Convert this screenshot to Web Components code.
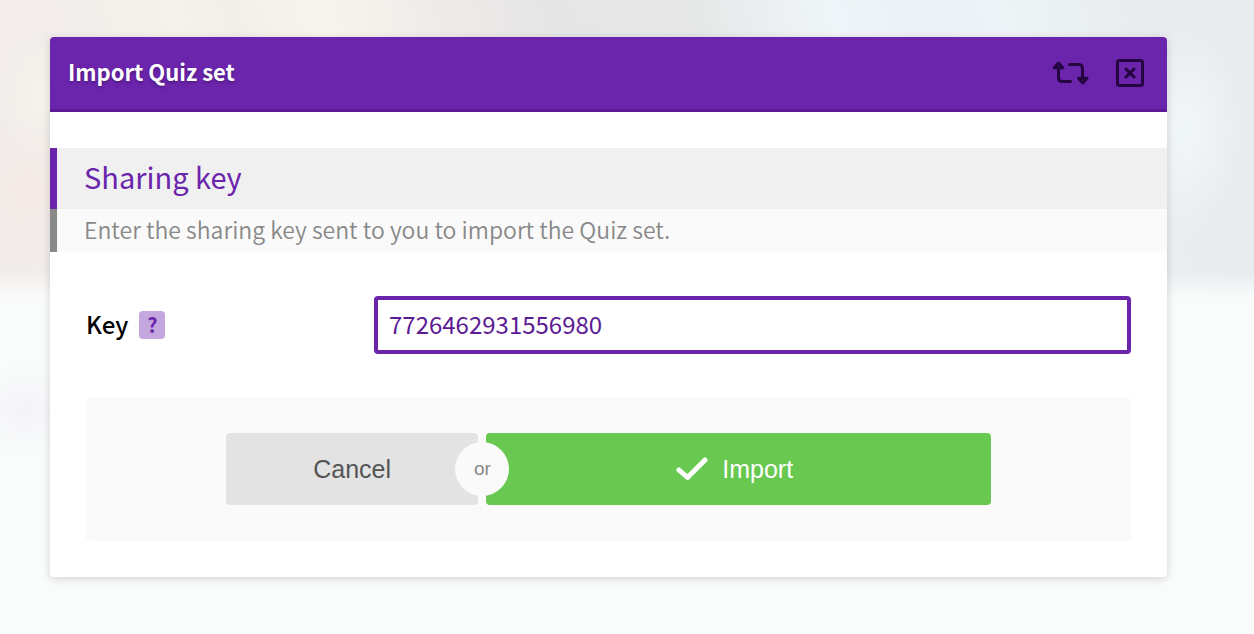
<!DOCTYPE html>
<html lang="en">
<head>
<meta charset="utf-8">
<title>Import Quiz set</title>
<style>
  html { min-height: 100%; background: #fafcfb; }
  body {
    margin: 0;
    min-height: 100vh;
    box-sizing: border-box;
    padding: 37px 87px 57px 50px;
    font-family: "Noto Sans CJK SC", "Open Sans", sans-serif;
    color: #000;
    background:
      radial-gradient(ellipse 60px 50px at 25px 410px, #f4f4f8 0%, transparent 100%),
      linear-gradient(to bottom, transparent 270px, #fafcfb 300px, #fafcfb 100%),
      radial-gradient(ellipse 60px 70px at 30px 190px, #f5eae8 0%, transparent 100%),
      radial-gradient(ellipse 50px 60px at 50px 95px, #f6f4ec 0%, transparent 100%),
      radial-gradient(ellipse 60px 110px at 1185px 130px, #f1f6f9 10%, transparent 100%),
      linear-gradient(75deg, #f1ece9 0%, #f2edea 16%, #f5f1eb 24%, #f3eeea 28%, #f8f5ed 34%, #f0ebe9 42%, #e6e6e6 50%, #e6e7e7 60%, #eff5f8 70%, #ebf1f4 76%, #edf3f6 82%, #e7ebee 93%, #e8ecef 100%);
  }
</style>
</head>
<body>
<quiz-dialog>
  <span slot="title">Import Quiz set</span>
  <icon-button slot="tools" label="Switch" icon="swap"></icon-button>
  <icon-button slot="tools" label="Close" icon="close"></icon-button>
  <section-heading>
    Sharing key
    <span slot="hint">Enter the sharing key sent to you to import the Quiz set.</span>
  </section-heading>
  <key-field label="Key" value="7726462931556980"></key-field>
  <action-bar></action-bar>
</quiz-dialog>

<script>
  function define(name, html, setup) {
    const template = document.createElement('template');
    template.innerHTML = html;
    customElements.define(name, class extends HTMLElement {
      constructor() {
        super();
        this.attachShadow({ mode: 'open' }).append(template.content.cloneNode(true));
      }
      connectedCallback() { if (setup) setup(this, this.shadowRoot); }
    });
  }

  define('quiz-dialog', `
    <style>
      :host { display: block; background: #fff; border-radius: 4px; box-shadow: 0 2px 8px rgba(0,0,0,.16); }
      header {
        display: flex; align-items: center; justify-content: space-between;
        box-sizing: border-box; height: 75px; padding: 0 23px 0 18px;
        background: #6b24ac; border-bottom: 3px solid #5c1a94; border-radius: 4px 4px 0 0;
      }
      h1 { margin: 0; padding-bottom: 4px; font-size: 22px; line-height: 36px; font-weight: 700; color: #fff; text-shadow: 0 2px 3px rgba(0,0,0,.25); }
      .tools { display: flex; align-items: center; gap: 26px; }
      .body { padding: 36px 0; }
    </style>
    <header><h1><slot name="title"></slot></h1><div class="tools"><slot name="tools"></slot></div></header>
    <div class="body"><slot></slot></div>`);

  const icons = {
    swap: `<svg width="38" height="30" viewBox="0 0 38 30"><g fill="none" stroke="currentColor" stroke-width="3" stroke-linecap="round" stroke-linejoin="round"><path d="M2.300 9.700L6.500 5l4.200 4.700zM6.500 10v9.500q0 4 4 4h8M17.500 6.500h9q4 0 4 4v9.500"/><path d="M26.500 20.300h8.500l-4.200 4.700z"/></g></svg>`,
    close: `<svg width="28" height="30" viewBox="0 0 28 30"><g fill="none" stroke="currentColor" stroke-width="3" stroke-linecap="round" stroke-linejoin="round"><rect x="1.500" y="2.500" width="25" height="25" rx="2"/><path d="M10 11l8 8M18 11l-8 8"/></g></svg>`
  };

  define('icon-button', `
    <style>
      :host { display: block; }
      button { display: block; margin: 0; padding: 0; border: 0; background: none; color: #25053f; cursor: pointer; }
      svg { display: block; }
    </style>
    <button type="button"></button>`, (host, root) => {
      const button = root.querySelector('button');
      button.setAttribute('aria-label', host.getAttribute('label'));
      button.innerHTML = icons[host.getAttribute('icon')];
    });

  define('section-heading', `
    <style>
      :host { display: block; }
      h2, p { margin: 0; padding-left: 27px; font-weight: 400; }
      h2 { padding-bottom: 4px; border-left: 7px solid #6b24ac; background: #f0f0f0; color: #6b24ac; font-size: 29px; line-height: 57px; }
      p { padding-bottom: 2px; border-left: 7px solid #888; background: #fafafa; color: #888; font-size: 23px; line-height: 41px; font-weight: 350; }
    </style>
    <h2><slot></slot></h2>
    <p><slot name="hint"></slot></p>`);

  define('key-field', `
    <style>
      :host { display: flex; align-items: center; padding: 44px 36px 43px; }
      .name { display: flex; align-items: center; gap: 11px; flex: 0 0 288px; }
      label { padding-bottom: 2px; font-size: 24px; line-height: 36px; font-weight: 500; }
      button {
        width: 26px; height: 28px; padding: 0; border: 0; border-radius: 4px;
        background: #c4a7de; color: #6b24ac; font: 700 20px/28px "Noto Sans CJK SC", sans-serif;
      }
      input {
        flex: 1; min-width: 0; box-sizing: border-box; height: 58px; padding: 0 11px 4px;
        border: 4px solid #6b24ac; border-radius: 4px; outline: 0; background: #fff;
        color: #5c1a94; font: 400 24px/36px "Noto Sans CJK SC", sans-serif;
      }
    </style>
    <div class="name"><label for="key"></label><button type="button" aria-label="Help">?</button></div>
    <input id="key" type="text">`, (host, root) => {
      root.querySelector('label').textContent = host.getAttribute('label');
      root.querySelector('input').value = host.getAttribute('value');
    });

  define('action-bar', `
    <style>
      :host { display: block; margin: 0 36px; padding: 36px; background: #fafafa; border-radius: 4px; }
      .group { position: relative; display: grid; grid-template-columns: 1fr 2fr; gap: 8px; max-width: 765px; margin: 0 auto; }
      button {
        display: flex; align-items: center; justify-content: center; gap: 14px;
        height: 72px; padding: 0; border: 0; border-radius: 4px;
        font: 25px/36px "Liberation Sans", Arial, sans-serif;
      }
      .cancel { background: #e3e3e3; color: #555; }
      .import { padding-right: 8px; background: #68c84f; color: #fff; }
      .or {
        position: absolute; left: calc((100% - 8px) / 3 + 4px); top: 50%; transform: translate(-50%, -50%);
        width: 54px; height: 54px; border-radius: 50%; background: #fafafa; color: #888;
        font: 19px/54px "Liberation Sans", Arial, sans-serif; text-align: center;
      }
    </style>
    <div class="group">
      <button class="cancel" type="button">Cancel</button>
      <button class="import" type="submit">
        <svg width="32" height="24" viewBox="0 0 32 24" aria-hidden="true"><path d="M3 13l8.500 7.500L29 3" fill="none" stroke="#fff" stroke-width="5" stroke-linecap="round" stroke-linejoin="round"/></svg>
        Import
      </button>
      <span class="or">or</span>
    </div>`);
</script>
</body>
</html>
